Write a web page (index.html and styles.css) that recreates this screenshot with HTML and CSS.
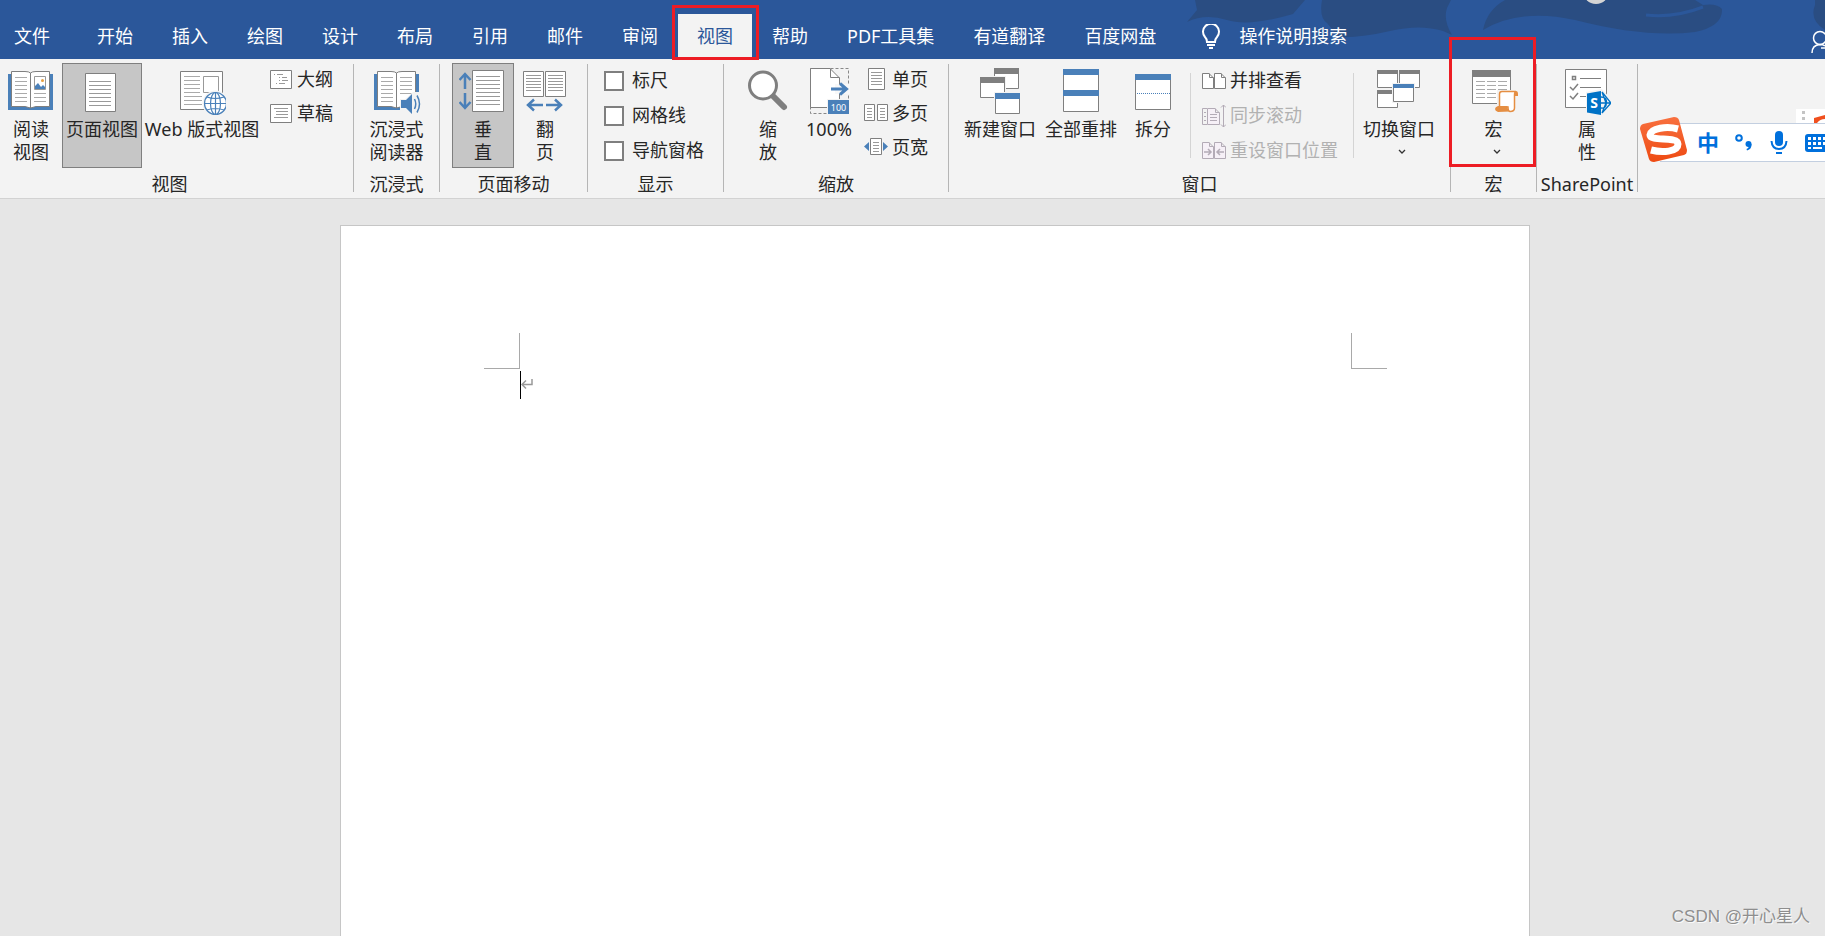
FILE: index.html
```html
<!DOCTYPE html>
<html lang="zh-CN">
<head>
<meta charset="utf-8">
<title>Word - 视图</title>
<link rel="stylesheet" href="styles.css">
</head>
<body>
<header class="titlebar">
  <svg class="art" viewBox="0 0 650 59" aria-hidden="true">
    <path d="M20 0 22 10 12 22Q30 13 52 20T118 14L130 0ZM147 0Q144 18 152 23L164 37Q185 38 215 31T268 31L277 35Q268 20 272 8L276 0ZM308 30Q312 10 330 0H520L528 5Q542 3 547 9Q548 26 520 32Q470 38 400 20Q345 8 308 30ZM640 0H650V30Q634 20 640 5Z" fill="#2a4d82"/>
    <path d="M471 15Q500 18 528 7" fill="none" stroke="#2b579a" stroke-width="3"/>
    <circle cx="421" cy="-9" r="13" fill="#d4d4d4"/>
  </svg>
  <nav class="tabs">
    <a class="tab tab-file" href="#">文件</a>
    <a class="tab" href="#">开始</a>
    <a class="tab" href="#">插入</a>
    <a class="tab" href="#">绘图</a>
    <a class="tab" href="#">设计</a>
    <a class="tab" href="#">布局</a>
    <a class="tab" href="#">引用</a>
    <a class="tab" href="#">邮件</a>
    <a class="tab" href="#">审阅</a>
    <a class="tab tab-active marked" href="#" aria-current="page">视图</a>
    <a class="tab" href="#">帮助</a>
    <a class="tab" href="#">PDF工具集</a>
    <a class="tab" href="#">有道翻译</a>
    <a class="tab" href="#">百度网盘</a>
  </nav>
  <button class="tell-me" type="button">
    <svg width="20" height="26" viewBox="0 0 20 26" fill="none" stroke="#fff" stroke-width="2"><path d="M6 18Q6 15 4 13A8 8 0 1 1 16 13Q14 15 14 18ZM6 21H14M8 24H12"/></svg>
    操作说明搜索
  </button>
  <button class="share" type="button" aria-label="共享">
    <svg width="14" height="24" viewBox="0 0 14 24" fill="none" stroke="#fff" stroke-width="1.500"><circle cx="9" cy="8" r="6.500"/><path d="M1 23Q1 15 9 14.500Q12 14.500 14 16M10 18H14"/></svg>
  </button>
</header>

<main>
<section class="ribbon" aria-label="视图">
  <div class="group">
    <div class="tools">
      <button class="big w62" type="button">
        <svg width="48" height="50" viewBox="0 0 48 50"><path d="M1 7H46V43H1Z" fill="#4a80b9"/><path d="M4.500 4.500H18Q22 4.500 23.500 6Q25 4.500 29 4.500H42.500V39.500H29L23.500 41 18 39.500H4.500Z" fill="#fff" stroke="#7f7f7f"/><path d="M23.500 6V41" stroke="#7f7f7f"/><path d="M8 10.500H20M8 14.500H20M8 18.500H20M8 22.500H20M8 26.500H20M8 30.500H20M8 34.500H20M27 26.500H39M27 30.500H39M27 34.500H39" stroke="#aaa"/><path d="M27.500 9.500H38.500V22.500H27.500Z" fill="#fff" stroke="#999"/><circle cx="35.500" cy="13.500" r="1.500" fill="#e8a040"/><path d="M28 22V19L31 16 34 20 36 18 38 20V22Z" fill="#4a80b9"/></svg>
        阅读<br>视图
      </button>
      <button class="big w80 on" type="button" aria-pressed="true">
        <svg width="48" height="50" viewBox="0 0 48 50"><path d="M7.500 6.500H37.500V44.500H7.500Z" fill="#fff" stroke="#7f7f7f"/><path d="M11 14.500H33M11 18.500H33M11 22.500H33M11 26.500H33M11 30.500H33M11 34.500H33M11 38.500H33" stroke="#999"/></svg>
        页面视图
      </button>
      <button class="big w120" type="button">
        <svg width="48" height="50" viewBox="0 0 48 50"><path d="M2.500 4.500H44.500V42.500H2.500Z" fill="#fff" stroke="#7f7f7f"/><path d="M6 9.500H22M6 13.500H22M6 17.500H22M6 21.500H22M6 25.500H22M6 29.500H24M6 33.500H24M6 37.500H24" stroke="#aaa"/><path d="M25.500 9.500H40.500V25.500H25.500Z" fill="#fff" stroke="#999"/><circle cx="37.500" cy="36.500" r="13" fill="#f3f3f3"/><g fill="#fff" stroke="#4a80b9" stroke-width="1.200"><circle cx="37.500" cy="36.500" r="11"/><ellipse cx="37.500" cy="36.500" rx="5" ry="11"/><path d="M37.500 25V48M26 36.500H49M29 30Q37 33 46 30M29 43Q37 40 46 43" fill="none"/></g></svg>
        Web 版式视图
      </button>
      <div class="stack view-stack">
        <button class="small" type="button"><svg width="22" height="19" viewBox="0 0 22 19"><path d="M.5.5H21.500V18.500H.5Z" fill="#fff" stroke="#7f7f7f"/><path d="M4 4.500H5M7 4.500H13M9 7.500H10M12 7.500H17M9 10.500H10M12 10.500H18M6 13.500H7M9 13.500H15" stroke="#999"/></svg>大纲</button>
        <button class="small" type="button"><svg width="22" height="19" viewBox="0 0 22 19"><path d="M.5.5H21.500V18.500H.5Z" fill="#fff" stroke="#7f7f7f"/><path d="M4 4.500H18M6 7.500H18M6 10.500H18M4 13.500H18" stroke="#999"/></svg>草稿</button>
      </div>
    </div>
    <h2 class="caption caption-view">视图</h2>
  </div>
  <i class="rule"></i>

  <div class="group">
    <div class="tools">
      <button class="big w85" type="button">
        <svg width="48" height="50" viewBox="0 0 48 50"><path d="M1 7H46V43H1Z" fill="#4a80b9"/><path d="M4.500 4.500H18Q22 4.500 23.500 6Q25 4.500 29 4.500H42.500V39.500H29L23.500 41 18 39.500H4.500Z" fill="#fff" stroke="#7f7f7f"/><path d="M23.500 6V41" stroke="#7f7f7f"/><path d="M8 10.500H20M8 14.500H20M8 18.500H20M8 22.500H20M8 26.500H20M8 30.500H20M8 34.500H20M27 10.500H39M27 14.500H39M27 18.500H39M27 22.500H39M27 26.500H39" stroke="#aaa"/><path d="M27 32H32L40 25H48V50H40L33 43H27Z" fill="#f3f3f3"/><path d="M28 33H33L39 27V47L33 41H28Z" fill="#4a80b9"/><path d="M41.500 32Q44 37 41.500 42M44 28.500Q49 37 44 45.500" fill="none" stroke="#4a80b9" stroke-width="1.500"/></svg>
        沉浸式<br>阅读器
      </button>
    </div>
    <h2 class="caption">沉浸式</h2>
  </div>
  <i class="rule"></i>

  <div class="group">
    <div class="tools move-tools">
      <button class="big w62 on" type="button" aria-pressed="true">
        <svg width="48" height="50" viewBox="0 0 48 50"><path d="M13.500 3.500H44.500V44.500H13.500Z" fill="#fff" stroke="#7f7f7f"/><path d="M17 9.500H41M17 13.500H41M17 17.500H41M17 21.500H41M17 25.500H41M17 29.500H41M17 33.500H41M17 37.500H41" stroke="#999"/><path d="M6 22V7M.5 13 6 7 11.500 13M6 26V41M.5 35 6 41 11.500 35" fill="none" stroke="#4a80b9" stroke-width="2.500"/></svg>
        垂<br>直
      </button>
      <button class="big w62" type="button">
        <svg width="48" height="50" viewBox="0 0 48 50"><path d="M2.500 4.500H22.500V29.500H2.500ZM24.500 4.500H44.500V29.500H24.500Z" fill="#fff" stroke="#7f7f7f"/><path d="M5 8.500H20M5 11.500H20M5 14.500H20M5 17.500H20M5 20.500H20M5 23.500H20M27 8.500H42M27 11.500H42M27 14.500H42M27 17.500H42M27 20.500H42M27 23.500H42" stroke="#999"/><path d="M22 38H7M13 32.500 7 38 13 43.500M25 38H40M34 32.500 40 38 34 43.500" fill="none" stroke="#4a80b9" stroke-width="2.500"/></svg>
        翻<br>页
      </button>
    </div>
    <h2 class="caption">页面移动</h2>
  </div>
  <i class="rule"></i>

  <div class="group">
    <div class="tools">
      <div class="stack stack-35 show-stack">
        <label class="check"><input type="checkbox">标尺</label>
        <label class="check"><input type="checkbox">网格线</label>
        <label class="check"><input type="checkbox">导航窗格</label>
      </div>
    </div>
    <h2 class="caption">显示</h2>
  </div>
  <i class="rule"></i>

  <div class="group">
    <div class="tools zoom-tools">
      <button class="big w52" type="button">
        <svg width="48" height="50" viewBox="0 0 48 50"><path d="M28 28 40 40" stroke="#7f7f7f" stroke-width="6" stroke-linecap="round"/><circle cx="19" cy="18.500" r="13.500" fill="#fff" stroke="#7f7f7f" stroke-width="3"/></svg>
        缩<br>放
      </button>
      <button class="big w52" type="button">
        <svg width="48" height="50" viewBox="0 0 48 50"><path d="M5.500 1.500H43.500V46.500H5.500Z" fill="none" stroke="#888" stroke-dasharray="3 2"/><path d="M5.500 1.500H25L34.500 11V40.500H5.500Z" fill="#fff" stroke="#7f7f7f"/><path d="M25.500 1.500V10.500H34.500" fill="none" stroke="#7f7f7f"/><path d="M30 17H45V27H30Z" fill="#f8f8f8"/><path d="M26 22H41M35 16.500 41.500 22 35 27.500" fill="none" stroke="#4a80b9" stroke-width="3"/><path d="M22 32H45V48H22Z" fill="#f3f3f3"/><path d="M23 33H44V47H23Z" fill="#4a80b9"/><text class="icon-number" x="33.500" y="44" text-anchor="middle">100</text></svg>
        100%
      </button>
      <div class="stack zoom-stack">
        <button class="small" type="button"><svg width="24" height="22" viewBox="0 0 24 22"><path d="M4.500.5H20.500V21.500H4.500Z" fill="#fff" stroke="#7f7f7f"/><path d="M7 4.500H18M7 7.500H18M7 10.500H18M7 13.500H18M7 16.500H18" stroke="#999"/></svg>单页</button>
        <button class="small" type="button"><svg width="24" height="22" viewBox="0 0 24 22"><path d="M.5 2.500H10.500V18.500H.5ZM13.500 2.500H23.500V18.500H13.500Z" fill="#fff" stroke="#7f7f7f"/><path d="M3 6.500H8M3 9.500H8M3 12.500H8M3 15.500H8M16 6.500H21M16 9.500H21M16 12.500H21M16 15.500H21" stroke="#999"/></svg>多页</button>
        <button class="small" type="button"><svg width="24" height="22" viewBox="0 0 24 22"><path d="M6.500 2.500H17.500V18.500H6.500Z" fill="#fff" stroke="#7f7f7f"/><path d="M9 6.500H15M9 9.500H15M9 12.500H15M9 15.500H15" stroke="#999"/><path d="M5 6V15L0 10.500ZM19 6V15L24 10.500Z" fill="#4a80b9"/></svg>页宽</button>
      </div>
    </div>
    <h2 class="caption">缩放</h2>
  </div>
  <i class="rule"></i>

  <div class="group">
    <div class="tools window-tools">
      <button class="big w80" type="button">
        <svg width="48" height="50" viewBox="0 0 48 50"><path d="M18.500 1.500H42.500V21.500H18.500Z" fill="#fff" stroke="#7f7f7f"/><path d="M18 1H43V7H18Z" fill="#7f7f7f"/><path d="M3 9H30V32H3Z" fill="#f3f3f3"/><path d="M4.500 10.500H28.500V30.500H4.500Z" fill="#fff" stroke="#7f7f7f"/><path d="M4 10H29V16H4Z" fill="#7f7f7f"/><path d="M18 25H45V48H18Z" fill="#f3f3f3"/><path d="M19.500 26.500H43.500V46.500H19.500Z" fill="#fff" stroke="#7f7f7f"/><path d="M19 26H44V32H19Z" fill="#4a80b9"/></svg>
        新建窗口
      </button>
      <button class="big w80" type="button">
        <svg width="48" height="50" viewBox="0 0 48 50"><path d="M6.500 2.500H41.500V44.500H6.500Z" fill="#fff" stroke="#7f7f7f"/><path d="M6 2H42V8H6ZM6 23H42V29H6Z" fill="#4a80b9"/></svg>
        全部重排
      </button>
      <button class="big w62" type="button">
        <svg width="48" height="50" viewBox="0 0 48 50"><path d="M6.500 7.500H41.500V42.500H6.500Z" fill="#fff" stroke="#7f7f7f"/><path d="M6 7H42V13H6Z" fill="#4a80b9"/><path d="M8 26.500H41" stroke="#4a80b9" stroke-dasharray="1 1"/></svg>
        拆分
      </button>
      <i class="inner-rule"></i>
      <div class="stack stack-35 window-stack">
        <button class="small" type="button"><svg width="24" height="24" viewBox="0 0 24 24"><path d="M.5 4.500H7L11.500 9V19.500H.5ZM12.500 4.500H19L23.500 9V19.500H12.500Z" fill="#fff" stroke="#7f7f7f"/><path d="M7.500 4.500V8.500H11.500M19.500 4.500V8.500H23.500" fill="none" stroke="#7f7f7f"/></svg>并排查看</button>
        <button class="small" type="button" disabled><svg width="24" height="24" viewBox="0 0 24 24" fill="none" stroke="#b3abb6"><path d="M5 4.500H.5V20.500H5M2 8.500H4M2 12.500H4M2 16.500H4"/><path d="M5.500 4.500H13L17.500 9V20.500H5.500ZM13.500 4.500V8.500H17.500" fill="#f6f0f7"/><path d="M8 10.500H15M8 13.500H15M8 16.500H15M21.500 1V23M19 3.500 21.500 1 24 3.500M19 20.500 21.500 23 24 20.500"/></svg>同步滚动</button>
        <button class="small" type="button" disabled><svg width="24" height="24" viewBox="0 0 24 24" fill="#f6f0f7" stroke="#b3abb6"><path d="M.5 3.500H7L11.500 8V19.500H.5ZM12.500 3.500H19L23.500 8V19.500H12.500ZM7.500 3.500V7.500H11.500M19.500 3.500V7.500H23.500"/><path d="M2 13H9M6 10 9 13 6 16M22 13H15M18 10 15 13 18 16" fill="none" stroke-width="1.500"/></svg>重设窗口位置</button>
      </div>
      <i class="inner-rule"></i>
      <button class="big w80 switch" type="button">
        <svg width="48" height="50" viewBox="0 0 48 50"><path d="M2.500 3.500H22.500V20.500H2.500ZM24.500 3.500H44.500V20.500H24.500ZM2.500 23.500H22.500V40.500H2.500Z" fill="#fff" stroke="#7f7f7f"/><path d="M2 3H23V7H2ZM24 3H45V7H24ZM2 23H23V27H2Z" fill="#7f7f7f"/><path d="M17 16H40V36H17Z" fill="#f3f3f3"/><path d="M18.500 17.500H38.500V34.500H18.500Z" fill="#fff" stroke="#7f7f7f"/><path d="M18 17H39V21H18Z" fill="#4a80b9"/></svg>
        切换窗口
        <svg class="chevron" width="14" height="6" viewBox="0 0 14 6"><path d="M7 1 10 4 13 1" fill="none" stroke="#333" stroke-width="1.300"/></svg>
      </button>
    </div>
    <h2 class="caption">窗口</h2>
  </div>
  <i class="rule"></i>

  <div class="group">
    <div class="tools">
      <button class="big w85 marked" type="button">
        <svg width="48" height="50" viewBox="0 0 48 50"><path d="M2.500 3.500H40.500V36.500H2.500Z" fill="#fff" stroke="#7f7f7f"/><path d="M2 3H41V10H2Z" fill="#7f7f7f"/><path d="M6 14.500H15M17 14.500H26M28 14.500H37M6 18.500H15M17 18.500H26M28 18.500H37M6 22.500H15M17 22.500H26M28 22.500H37M6 26.500H15M17 26.500H26M6 30.500H15M17 30.500H26" stroke="#aaa"/><path d="M27 23H49V30H46V46H24V37H27Z" fill="#f3f3f3"/><path d="M29.500 40V27Q29.500 24.500 32 24.500H46Q44.500 25 44.500 28V41Q44.500 44.500 40 44.500 38 44 38 40Z" fill="#fff" stroke="#e58e42" stroke-width="1.500"/><path d="M45 24H46Q48 24 48 27V29H44.500ZM28 39H37.500Q37 42 40 44.500L28 45Q25 44 25 42T28 39Z" fill="#e58e42"/></svg>
        宏
        <svg class="chevron" width="14" height="6" viewBox="0 0 14 6"><path d="M7 1 10 4 13 1" fill="none" stroke="#333" stroke-width="1.300"/></svg>
      </button>
    </div>
    <h2 class="caption">宏</h2>
  </div>
  <i class="rule"></i>

  <div class="group">
    <div class="tools">
      <button class="big w100" type="button">
        <svg width="48" height="50" viewBox="0 0 48 50"><path d="M2.500 2.500H43.500V40.500H2.500Z" fill="#fff" stroke="#7f7f7f"/><path d="M17 11.500H38M17 20.500H38M17 29.500H24" stroke="#7f7f7f"/><path d="M9.500 9.500H12.500V12.500H9.500ZM7 20 10 23 15 17M7 29 10 32 15 26" fill="none" stroke="#7f7f7f" stroke-width="1.500"/><path d="M23 25 39 22 49 33V37L39 49 23 46Z" fill="#f3f3f3"/><path d="M39 25 48 36 39 46M38 30Q44 30 43.500 36T38 41M38 36H48M39 25 43 36 39 46" fill="none" stroke="#0072c6" stroke-width="1.300"/><path d="M24 26.500 38 24V48L24 45.500Z" fill="#0072c6"/><text class="icon-initial" x="31" y="41" text-anchor="middle">S</text></svg>
        属<br>性
      </button>
    </div>
    <h2 class="caption">SharePoint</h2>
  </div>
  <i class="rule"></i>
</section>

<section class="canvas" aria-label="文档">
  <article class="page">
    <div class="margins"><i class="corner corner-left"></i><i class="corner corner-right"></i></div>
    <p class="line"><i class="caret"></i><svg width="12" height="12" viewBox="0 0 12 12" fill="none" stroke="#999" stroke-width="1.500"><path d="M11 0V5.500H1M5 1.500 1 5.500 5 9.500"/></svg></p>
  </article>
</section>
</main>

<aside class="ime" aria-label="输入法">
  <svg class="ime-back" width="29" height="14" viewBox="0 0 29 14"><path d="M0 0H29V14H0Z" fill="#fff"/><path d="M6 2H9V5H6ZM6 8H9V11H6Z" fill="#c4c4c4"/><path d="M18 14V9L29 6V14Z" fill="#f0501e"/><path d="M21 14Q24 10 29 10V14Z" fill="#fff"/></svg>
  <div class="ime-bar">
    <button class="ime-lang" type="button">中</button>
    <button class="ime-key" type="button" aria-label="标点"><svg width="18" height="20" viewBox="0 0 18 20"><circle cx="4" cy="5" r="2.800" fill="none" stroke="#0070dc" stroke-width="2"/><circle cx="13.500" cy="11" r="3" fill="#0070dc"/><path d="M16.500 11Q17 16 12 17.500L11.500 16Q14 15 14 12Z" fill="#0070dc"/></svg></button>
    <button class="ime-key" type="button" aria-label="语音"><svg width="18" height="24" viewBox="0 0 18 24"><rect x="5" y="0" width="8" height="15" rx="4" fill="#0070dc"/><path d="M1.500 10Q2 18 9 18T16.500 10" fill="none" stroke="#0070dc" stroke-width="2"/><path d="M6 21H12V23H6Z" fill="#0070dc"/></svg></button>
    <button class="ime-key" type="button" aria-label="键盘"><svg width="20" height="18" viewBox="0 0 20 18"><path d="M20 0H3Q0 0 0 3V15Q0 18 3 18H20Z" fill="#0070dc"/><path d="M3 3H6V6H3ZM8 3H11V6H8ZM13 3H16V6H13ZM18 3H20V6H18ZM3 8H6V11H3ZM8 8H11V11H8ZM13 8H16V11H13ZM18 8H20V11H18ZM3 13H6V15H3ZM8 13H17V15H8Z" fill="#fff"/></svg></button>
  </div>
  <svg class="ime-logo" width="48" height="46" viewBox="0 0 48 46"><defs><linearGradient id="logo" x2="0" y2="1"><stop stop-color="#f8703f"/><stop offset="1" stop-color="#ee4a12"/></linearGradient></defs><path d="M3 7 34 0Q38 0 39 3L47 33Q47 37 44 38L14 45Q10 45 9 42L0 12Q0 8 3 7Z" fill="url(#logo)"/><path d="M38 12C27 9 11 11 10 18 10 25 38 19 38 27 38 35 22 36 11 33" fill="none" stroke="#fff" stroke-width="7"/></svg>
</aside>
<footer class="watermark">CSDN @开心星人</footer>
</body>
</html>
```
FILE: styles.css
```css
* { box-sizing: border-box; }

body {
  margin: 0;
  height: 100vh;
  overflow: hidden;
  display: flex;
  flex-direction: column;
  background: #e6e6e6;
  color: #262626;
  font: 18px/23px "Noto Sans", "Noto Sans CJK SC", sans-serif;
}

button {
  margin: 0;
  padding: 0;
  border: 1px solid transparent;
  background: none;
  color: inherit;
  font: inherit;
}

main {
  flex: 1;
  min-height: 0;
  display: flex;
  flex-direction: column;
}

/* Title bar and tabs */
.titlebar {
  position: relative;
  display: flex;
  align-items: flex-end;
  height: 59px;
  background: #2b579a;
  color: #fff;
}
.art {
  position: absolute;
  top: 0;
  right: 0;
  width: 650px;
  height: 59px;
}
.tabs {
  display: flex;
  gap: 1px;
}
.tab {
  position: relative;
  padding: 0 19px;
  line-height: 45px;
  color: #fff;
  text-decoration: none;
  white-space: nowrap;
}
.tab-file { padding: 0 27px 0 14px; }
.tab-active {
  background: #f3f3f3;
  color: #2b579a;
}
.marked { position: relative; }
.marked::after {
  content: "";
  position: absolute;
  z-index: 2;
  inset: -27px -1px 0 -3px;
  border: 3px solid #ed1c24;
}
.tab-active.marked::after { inset: -9px -7px -1px -6px; }
.tell-me {
  position: relative;
  display: flex;
  align-items: center;
  gap: 18px;
  height: 45px;
  margin-left: 25px;
}
.share {
  position: relative;
  height: 34px;
  border-width: 0;
  margin-left: auto;
}
.share svg { display: block; }

/* Ribbon */
.ribbon {
  display: flex;
  height: 140px;
  padding-top: 4px;
  border-bottom: 1px solid #d2d2d2;
  background: #f3f3f3;
}
.group { flex: none; }
.tools {
  display: flex;
  height: 105px;
}
.caption {
  margin: 4px 0 0;
  font-size: 18px;
  font-weight: 400;
  line-height: 24px;
  text-align: center;
}
.caption-view { padding-right: 14px; }
.rule {
  flex: none;
  width: 1px;
  height: 128px;
  margin-top: 1px;
  background: #b5b5b5;
}
.inner-rule {
  width: 1px;
  height: 85px;
  margin: 10px 0 0 5px;
  background: #d4d4d4;
}
.big {
  display: grid;
  align-content: start;
  justify-content: center;
  text-align: center;
  white-space: nowrap;
}
.big svg {
  display: block;
  margin: 3px auto 1px;
}
.big .chevron { margin: 8px auto 0; }
.on {
  border-color: #7f7f7f;
  background: #c6c6c6;
}
.w52 { width: 52px; }
.w62 { width: 62px; }
.w80 { width: 80px; }
.w85 { width: 85px; }
.w100 { width: 100px; }
.w120 { width: 120px; }
.icon-number {
  font: 9px "Noto Sans", sans-serif;
  fill: #fff;
}
.icon-initial {
  font: bold 14px "Noto Sans", sans-serif;
  fill: #fff;
}
.stack {
  display: grid;
  grid-auto-rows: 34px;
  align-content: start;
}
.stack-35 { grid-auto-rows: 35px; }
.small,
.check {
  display: flex;
  align-items: center;
  gap: 4px;
  border: 0;
  white-space: nowrap;
}
.small:disabled { color: #b1b1b1; }
.check { gap: 8px; }
.check input {
  appearance: none;
  width: 20px;
  height: 20px;
  margin: 0;
  border: 2px solid #7f7f7f;
  background: #fff;
}
.view-stack,
.zoom-stack { margin-top: -1px; }
.view-stack { padding: 0 20px 0 8px; }
.view-stack .small { gap: 5px; }
.move-tools { padding: 0 11px 0 12px; }
.show-stack { padding: 0 19px 0 16px; }
.zoom-tools {
  gap: 9px;
  padding: 0 20px 0 18px;
}
.window-tools {
  gap: 1px;
  padding: 0 11px;
}
.window-stack { padding: 0 9px 0 10px; }
.switch { margin-left: 4px; }

/* Document */
.canvas {
  flex: 1;
  min-height: 0;
  display: flex;
  justify-content: center;
  padding: 26px 0 0 45px;
}
.page {
  width: 1190px;
  padding: 107px 142px 0 143px;
  border: 1px solid #c6c6c6;
  border-bottom: 0;
  background: #fff;
}
.margins {
  display: flex;
  justify-content: space-between;
}
.corner {
  width: 36px;
  height: 36px;
  border-bottom: 1px solid #a9a9a9;
}
.corner-left { border-right: 1px solid #a9a9a9; }
.corner-right { border-left: 1px solid #a9a9a9; }
.line {
  display: flex;
  align-items: center;
  margin: 2px 0 0;
  padding-left: 36px;
}
.caret {
  width: 1px;
  height: 28px;
  background: #000;
}

/* Floating input-method bar */
.ime {
  position: absolute;
  top: 109px;
  right: 0;
  width: 185px;
}
.ime-back {
  display: block;
  margin-left: auto;
}
.ime-bar {
  display: flex;
  align-items: center;
  height: 39px;
  margin-left: 20px;
  padding-left: 36px;
  border: solid #c3cfe0;
  border-width: 1px 0;
  background: #fff;
}
.ime-bar button { border: 0; }
.ime-bar svg { display: block; }
.ime-lang {
  width: 24px;
  margin-right: 15px;
  color: #0070dc;
  font-size: 22px;
  font-weight: 700;
}
.ime-key { margin-right: 17px; }
.ime-key:last-child { margin-right: 0; }
.ime-logo {
  position: absolute;
  top: 8px;
  left: 0;
}
.watermark {
  position: absolute;
  right: 15px;
  bottom: 7px;
  color: #8e8e8e;
  font: 17px/24px "Liberation Sans", "Noto Sans CJK SC", sans-serif;
  text-shadow: 1px 1px #fafafa;
}
```
